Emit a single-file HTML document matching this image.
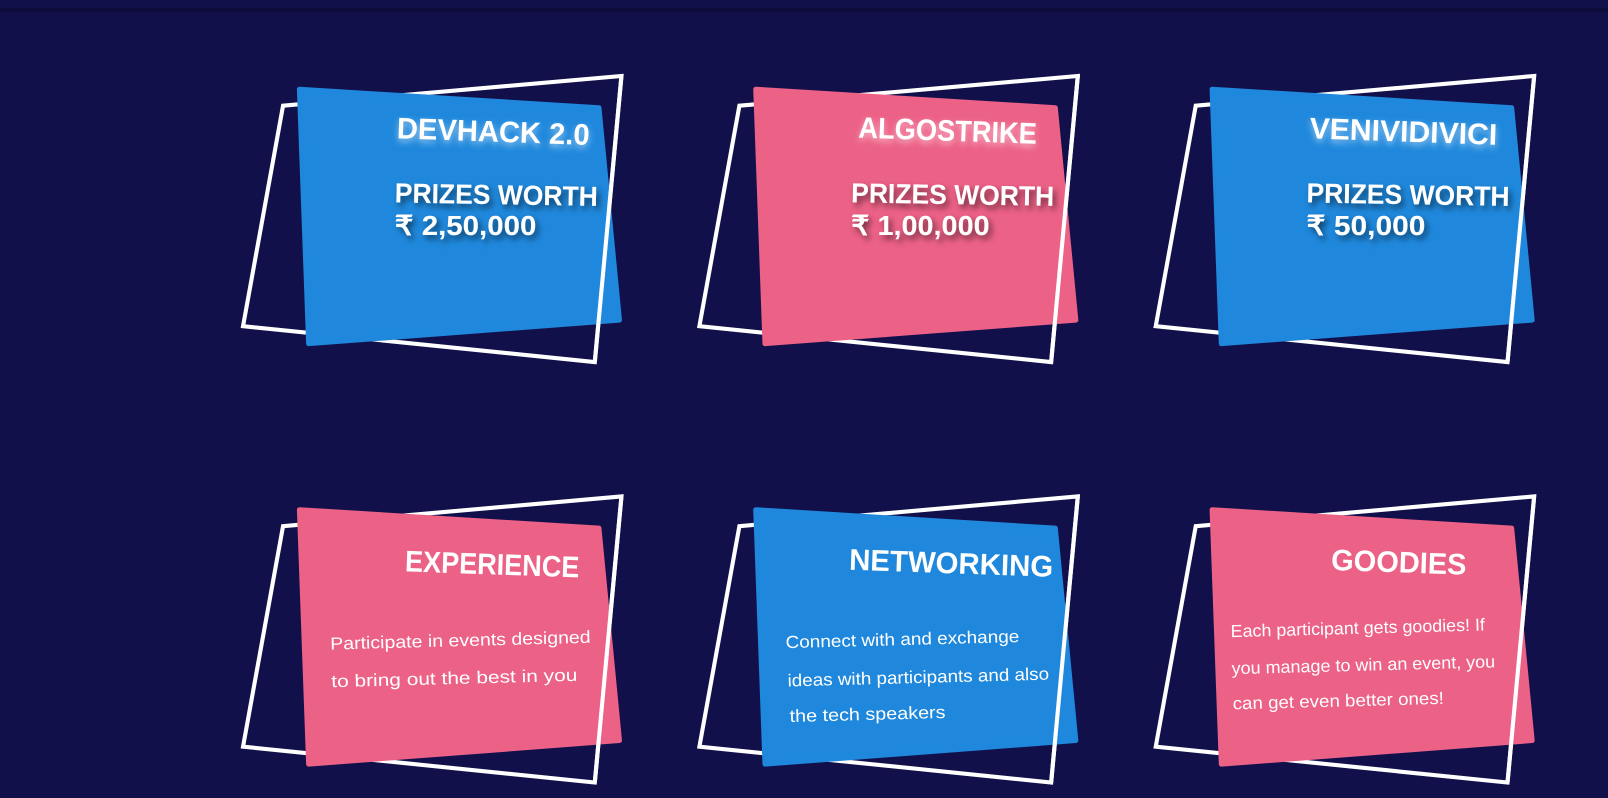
<!DOCTYPE html>
<html><head><meta charset="utf-8"><style>
html,body{margin:0;padding:0;background:#12104b;width:1608px;height:798px;overflow:hidden}
svg{display:block}
text{font-family:"Liberation Sans",sans-serif;fill:#fff}
.t{font-weight:bold;font-size:29px}
.p{font-weight:bold;font-size:27px}
.s{font-size:17px}
</style></head><body>
<svg width="1608" height="798" viewBox="0 0 1568 778">
<defs>
<filter id="glow" x="-20%" y="-60%" width="140%" height="220%"><feGaussianBlur in="SourceAlpha" stdDeviation="3.5" result="b"/><feFlood flood-color="#ffffff" flood-opacity="0.55"/><feComposite operator="in" in2="b"/><feOffset dx="0" dy="3"/><feMerge><feMergeNode/><feMergeNode in="SourceGraphic"/></feMerge></filter>
<filter id="sh" x="-20%" y="-50%" width="140%" height="200%"><feGaussianBlur in="SourceAlpha" stdDeviation="3"/><feOffset dx="3" dy="4"/><feComponentTransfer><feFuncA type="linear" slope="0.55"/></feComponentTransfer><feMerge><feMergeNode/><feMergeNode in="SourceGraphic"/></feMerge></filter>
<g id="out"><polygon points="276,103 606,74 580,353 237,318" fill="none" stroke="#fff" stroke-width="4"/></g>
<g id="edge"><line x1="606" y1="74" x2="580" y2="353" stroke="#fff" stroke-width="4"/></g>
</defs>
<rect x="0" y="0" width="1568" height="8" fill="#12104b"/>
<rect x="0" y="8" width="1568" height="4" fill="#0e0c3c"/>

<use href="#out"/>
<polygon points="292,87 584,105 604,312 301,335" fill="#1f88dc" stroke="#1f88dc" stroke-width="5" stroke-linejoin="round"/>
<use href="#edge"/>
<use href="#out" transform="translate(445,0)"/>
<polygon points="737,87 1029,105 1049,312 746,335" fill="#ec6186" stroke="#ec6186" stroke-width="5" stroke-linejoin="round"/>
<use href="#edge" transform="translate(445,0)"/>
<use href="#out" transform="translate(890,0)"/>
<polygon points="1182,87 1474,105 1494,312 1191,335" fill="#1f88dc" stroke="#1f88dc" stroke-width="5" stroke-linejoin="round"/>
<use href="#edge" transform="translate(890,0)"/>

<use href="#out" transform="translate(0,410)"/>
<polygon points="292,497 584,515 604,722 301,745" fill="#ec6186" stroke="#ec6186" stroke-width="5" stroke-linejoin="round"/>
<use href="#edge" transform="translate(0,410)"/>
<use href="#out" transform="translate(445,410)"/>
<polygon points="737,497 1029,515 1049,722 746,745" fill="#1f88dc" stroke="#1f88dc" stroke-width="5" stroke-linejoin="round"/>
<use href="#edge" transform="translate(445,410)"/>
<use href="#out" transform="translate(890,410)"/>
<polygon points="1182,497 1474,515 1494,722 1191,745" fill="#ec6186" stroke="#ec6186" stroke-width="5" stroke-linejoin="round"/>
<use href="#edge" transform="translate(890,410)"/>

<g filter="url(#glow)">
<text class="t" x="387" y="138" textLength="188" lengthAdjust="spacingAndGlyphs" transform="rotate(2 480 130)">DEVHACK 2.0</text>
<text class="t" x="837" y="137" textLength="174" lengthAdjust="spacingAndGlyphs" transform="rotate(2 920 130)">ALGOSTRIKE</text>
<text class="t" x="1277" y="138" textLength="183" lengthAdjust="spacingAndGlyphs" transform="rotate(2 1370 130)">VENIVIDIVICI</text>
</g>
<g filter="url(#sh)">
<text class="p" x="385" y="199" textLength="198" lengthAdjust="spacingAndGlyphs" transform="rotate(1 480 190)">PRIZES WORTH</text>
<text class="p" x="385" y="229" textLength="138" lengthAdjust="spacingAndGlyphs">₹ 2,50,000</text>
<text class="p" x="830" y="199" textLength="198" lengthAdjust="spacingAndGlyphs" transform="rotate(1 930 190)">PRIZES WORTH</text>
<text class="p" x="830" y="229" textLength="135" lengthAdjust="spacingAndGlyphs">₹ 1,00,000</text>
<text class="p" x="1274" y="199" textLength="198" lengthAdjust="spacingAndGlyphs" transform="rotate(1 1370 190)">PRIZES WORTH</text>
<text class="p" x="1274" y="229" textLength="116" lengthAdjust="spacingAndGlyphs">₹ 50,000</text>
</g>

<text class="t" x="395" y="560" textLength="170" lengthAdjust="spacingAndGlyphs" transform="rotate(2 480 550)">EXPERIENCE</text>
<text class="s" x="322" y="630" textLength="254" lengthAdjust="spacingAndGlyphs" transform="rotate(-1.5 450 625)">Participate in events designed</text>
<text class="s" x="323" y="667" textLength="240" lengthAdjust="spacingAndGlyphs" transform="rotate(-1.5 440 662)">to bring out the best in you</text>

<text class="t" x="828" y="559" textLength="199" lengthAdjust="spacingAndGlyphs" transform="rotate(2 930 550)">NETWORKING</text>
<text class="s" x="766" y="629" textLength="228" lengthAdjust="spacingAndGlyphs" transform="rotate(-1.5 880 624)">Connect with and exchange</text>
<text class="s" x="768" y="666" textLength="255" lengthAdjust="spacingAndGlyphs" transform="rotate(-1.5 895 661)">ideas with participants and also</text>
<text class="s" x="770" y="702" textLength="152" lengthAdjust="spacingAndGlyphs" transform="rotate(-1.5 846 697)">the tech speakers</text>

<text class="t" x="1298" y="558" textLength="132" lengthAdjust="spacingAndGlyphs" transform="rotate(2 1364 550)">GOODIES</text>
<text class="s" x="1200" y="618" textLength="248" lengthAdjust="spacingAndGlyphs" transform="rotate(-1.5 1324 613)">Each participant gets goodies! If</text>
<text class="s" x="1201" y="654" textLength="257" lengthAdjust="spacingAndGlyphs" transform="rotate(-1.5 1330 649)">you manage to win an event, you</text>
<text class="s" x="1202" y="689" textLength="206" lengthAdjust="spacingAndGlyphs" transform="rotate(-1.5 1305 684)">can get even better ones!</text>
</svg>
</body></html>
